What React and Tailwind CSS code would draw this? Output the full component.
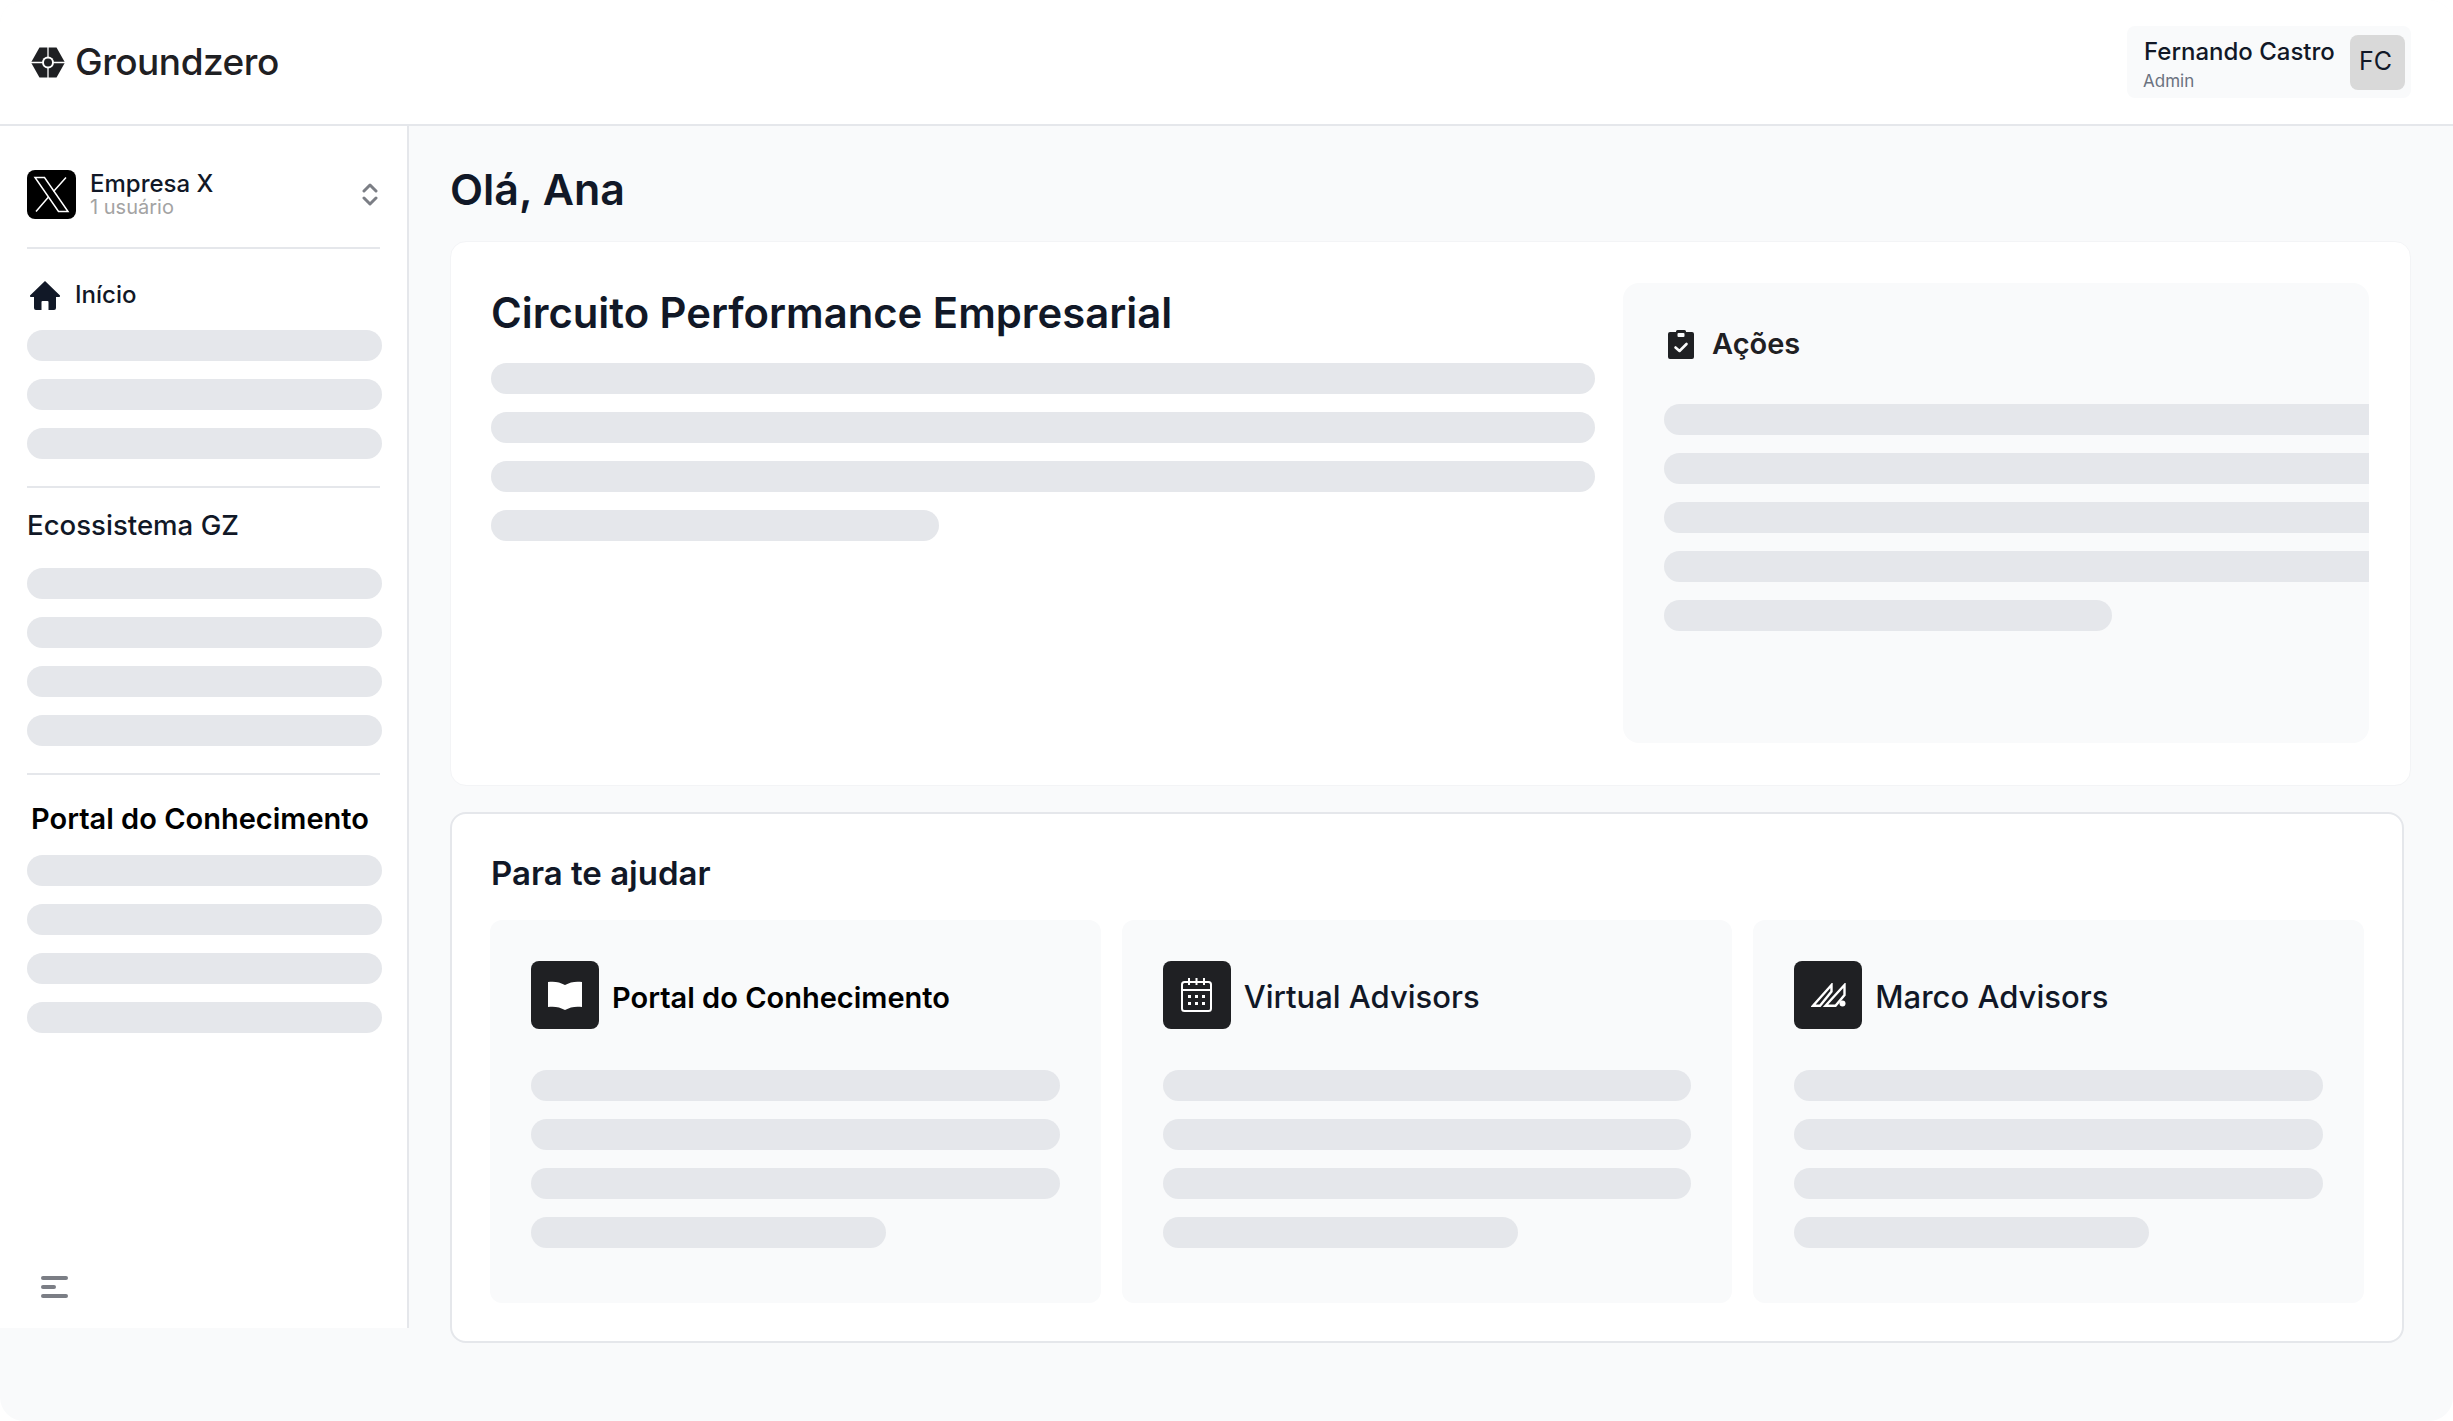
import React from "react";

const inter = "font-['Inter',sans-serif]";

const Skeleton = ({ className = "w-full" }) => (
  <div className={`h-[31px] shrink-0 rounded-full bg-[#e5e7eb] ${className}`} />
);

const SkeletonGroup = ({ count, last = "w-full", className = "" }) => (
  <div className={`flex flex-col gap-[18px] ${className}`}>
    {Array.from({ length: count }).map((_, i) => (
      <Skeleton key={i} className={i === count - 1 ? last : "w-full"} />
    ))}
  </div>
);

const GzLogo = () => (
  <svg width="34" height="31" viewBox="0 0 34 31">
    <path fill="#1f2023" d="M8.500 0.500h17L34 15.500 25.500 30.500h-17L0 15.500z" />
    <path d="M0 15.500h34M17 0v31" stroke="#fff" strokeWidth="1.300" />
    <circle cx="17" cy="15.500" r="6" fill="#fff" />
    <circle cx="17" cy="15.500" r="4" fill="#1f2023" />
  </svg>
);

const XLogo = () => (
  <svg width="37" height="37" viewBox="0 0 37 37" fill="none" stroke="#fff" strokeWidth="1.500">
    <path d="M2 1.500h9.500L35 35.500h-9.500z" />
    <path d="M33 1.500L20.500 15.500M15.500 21L3 35.500" />
  </svg>
);

const Chevrons = () => (
  <svg width="16" height="23" viewBox="0 0 16 23" fill="none" stroke="#7b7e85" strokeWidth="3" strokeLinecap="round" strokeLinejoin="round">
    <path d="M2 8l6-6 6 6" />
    <path d="M2 15l6 6 6-6" />
  </svg>
);

const HomeIcon = () => (
  <svg width="30" height="29" viewBox="0 0 30 29" fill="#111827">
    <path d="M15 0L0 14.500c-.4.600 0 1.500.800 1.500H4v11a2 2 0 0 0 2 2h5.500v-8a1 1 0 0 1 1-1h5a1 1 0 0 1 1 1v8H24a2 2 0 0 0 2-2V16h3.200c.8 0 1.200-.9.800-1.500z" />
  </svg>
);

const ClipboardIcon = () => (
  <svg width="26" height="29" viewBox="0 0 26 29">
    <path fill="#1f2023" d="M2 2h6V1.500A1.500 1.500 0 0 1 9.500 0h7A1.500 1.500 0 0 1 18 1.500V2h6a2 2 0 0 1 2 2v23a2 2 0 0 1-2 2H2a2 2 0 0 1-2-2V4a2 2 0 0 1 2-2z" />
    <rect x="9.500" y="3" width="7" height="4" rx="1" fill="#f9fafb" />
    <path d="M7.500 17.500l4 3.500 7-7" fill="none" stroke="#f9fafb" strokeWidth="2.600" strokeLinecap="round" strokeLinejoin="round" />
  </svg>
);

const BookIcon = () => (
  <svg width="34" height="29" viewBox="0 0 34 29" fill="#fff">
    <path d="M0 1c6-1 12 0 17 3 5-3 11-4 17-3v25c-6-1-12 0-17 3-5-3-11-4-17-3z" />
  </svg>
);

const CalendarIcon = () => (
  <svg width="31" height="34" viewBox="0 0 31 34" fill="none" stroke="#fff" strokeWidth="2">
    <rect x="1" y="4" width="29" height="29" rx="2.500" />
    <path d="M1 12h29M8 0v7M15.500 0v7M23 0v7" />
    <g fill="#fff" stroke="none">
      <rect x="7" y="17" width="3" height="3" />
      <rect x="14" y="17" width="3" height="3" />
      <rect x="21" y="17" width="3" height="3" />
      <rect x="7" y="24" width="3" height="3" />
      <rect x="14" y="24" width="3" height="3" />
      <rect x="21" y="24" width="3" height="3" />
    </g>
  </svg>
);

const MarcoIcon = () => (
  <svg width="35" height="24" viewBox="0 0 35 24" fill="none" stroke="#fff" strokeWidth="2.400" strokeLinejoin="miter">
    <path d="M2 22.800L20.500 2v6.500L9 22.800z" />
    <path d="M14.500 22.800L33.500 2v10L24.500 22.800z" />
    <circle cx="31.500" cy="20.500" r="3" fill="#fff" stroke="none" />
  </svg>
);

const HelpCard = ({ icon, title, titleClass }) => (
  <div className="rounded-xl bg-[#f9fafb] px-[41px] pt-[41px] pb-[55px]">
    <div className="flex items-center gap-[13px]">
      <div className="flex h-[68px] w-[68px] items-center justify-center rounded-lg bg-[#1f2023]">
        {icon}
      </div>
      <span className={`mt-[5px] ${titleClass}`}>{title}</span>
    </div>
    <SkeletonGroup count={4} last="w-[355px]" className="mt-[41px]" />
  </div>
);

export default function App() {
  return (
    <div className="min-h-screen bg-white">
      <div className="h-[1421px] overflow-hidden rounded-[24px] bg-[#f9fafb]">
        <header className="flex h-[126px] items-center justify-between border-b-2 border-[#e5e7eb] bg-white pr-[42px] pl-[31px]">
          <div className="flex items-center gap-[10px]">
            <GzLogo />
            <span className={`${inter} -mt-[2px] text-[37px] leading-none font-medium tracking-[-0.5px] text-[#1f2023]`}>
              Groundzero
            </span>
          </div>
          <div className="flex h-[72px] w-[284px] items-center justify-between rounded-lg bg-[#f9fafb] pr-[6px] pl-[16px]">
            <div className={`${inter} flex flex-col`}>
              <span className="mt-[4px] pl-[1px] text-[24px] leading-[30px] font-medium text-[#111827]">Fernando Castro</span>
              <span className="mt-[3px] text-[17px] leading-[22px] text-[#6b7280]">Admin</span>
            </div>
            <div className={`${inter} flex h-[55px] w-[55px] items-center justify-center rounded-lg bg-[#d9d9d9] pr-[4px] text-[25px] text-[#111827]`}>
              FC
            </div>
          </div>
        </header>

        <div className="flex items-start">
          <aside className="relative flex h-[1202px] w-[409px] shrink-0 flex-col border-r-2 border-[#e5e7eb] bg-white pt-[44px] pr-[25px] pl-[27px]">
            <div className="flex items-center">
              <div className="flex h-[49px] w-[49px] items-center justify-center rounded-lg bg-black">
                <XLogo />
              </div>
              <div className={`${inter} ml-[14px] flex h-[49px] flex-col pt-[1px]`}>
                <span className="text-[24px] leading-[25px] font-medium text-[#111827]">Empresa X</span>
                <span className="text-[20px] leading-[23px] text-[#a3a3a3]">1 usuário</span>
              </div>
              <div className="mr-[4px] ml-auto flex">
                <Chevrons />
              </div>
            </div>
            <div className="mt-[28px] h-[2px] w-[353px] bg-[#e5e7eb]" />
            <div className={`${inter} mt-[31px] flex h-[30px] items-center gap-[15px] pl-[3px] text-[24px] font-medium text-[#111827]`}>
              <HomeIcon />
              <span>Início</span>
            </div>
            <SkeletonGroup count={3} className="mt-[20px]" />
            <div className="mt-[27px] h-[2px] w-[353px] bg-[#e5e7eb]" />
            <div className={`${inter} mt-[21px] h-[32px] text-[27.600px] leading-[32px] font-medium text-[#111827]`}>
              Ecossistema GZ
            </div>
            <SkeletonGroup count={4} className="mt-[27px]" />
            <div className="mt-[27px] h-[2px] w-[353px] bg-[#e5e7eb]" />
            <div className={`${inter} mt-[26px] h-[36px] pl-[4px] text-[29px] leading-[36px] font-semibold whitespace-nowrap text-black`}>
              Portal do Conhecimento
            </div>
            <SkeletonGroup count={4} className="mt-[18px]" />
            <div className="absolute bottom-[30px] left-[41px] flex w-[27px] flex-col gap-[5px]">
              <div className="h-[4px] w-full rounded-full bg-[#7b7e85]" />
              <div className="h-[4px] w-[15px] rounded-full bg-[#7b7e85]" />
              <div className="h-[4px] w-full rounded-full bg-[#7b7e85]" />
            </div>
          </aside>

          <main className="min-w-0 flex-1 pl-[41px]">
            <h1 className={`${inter} mt-[40px] h-[46px] text-[43px] leading-[46px] font-semibold text-[#111827]`}>
              Olá, Ana
            </h1>
            <section className="mt-[29px] flex h-[545px] w-[1961px] gap-[28px] rounded-2xl border border-[#f3f4f6] bg-white pt-[41px] pl-[40px]">
              <div className="w-[1104px] shrink-0">
                <h2 className={`${inter} mt-[7px] h-[46px] text-[41.800px] leading-[46px] font-semibold whitespace-nowrap text-[#111827]`}>
                  Circuito Performance Empresarial
                </h2>
                <SkeletonGroup count={4} last="w-[448px]" className="mt-[27px]" />
              </div>
              <div className="h-[460px] w-[746px] overflow-hidden rounded-2xl bg-[#f9fafb] pt-[46px] pl-[41px]">
                <div className="flex h-[30px] items-center gap-[18px] pl-[4px]">
                  <ClipboardIcon />
                  <span className={`${inter} text-[29px] font-semibold text-[#1f2023]`}>Ações</span>
                </div>
                <div className="mt-[45px] flex w-[800px] flex-col gap-[18px]">
                  <Skeleton />
                  <Skeleton />
                  <Skeleton />
                  <Skeleton />
                  <Skeleton className="w-[448px]" />
                </div>
              </div>
            </section>
            <section className="mt-[26px] h-[531px] w-[1954px] rounded-2xl border-2 border-[#e5e7eb] bg-white pt-[41px] pl-[38px]">
              <h2 className={`${inter} h-[36px] pl-[1px] text-[33px] leading-[36px] font-semibold text-[#111827]`}>
                Para te ajudar
              </h2>
              <div className="mt-[29px] grid w-[1874px] grid-cols-3 gap-[21px]">
                <HelpCard
                  icon={<BookIcon />}
                  title="Portal do Conhecimento"
                  titleClass={`${inter} text-[29px] font-semibold text-black`}
                />
                <HelpCard
                  icon={<CalendarIcon />}
                  title="Virtual Advisors"
                  titleClass={`${inter} text-[31px] font-medium text-[#111827]`}
                />
                <HelpCard
                  icon={<MarcoIcon />}
                  title="Marco Advisors"
                  titleClass={`${inter} text-[31px] font-medium text-[#111827]`}
                />
              </div>
            </section>
          </main>
        </div>
      </div>
    </div>
  );
}
